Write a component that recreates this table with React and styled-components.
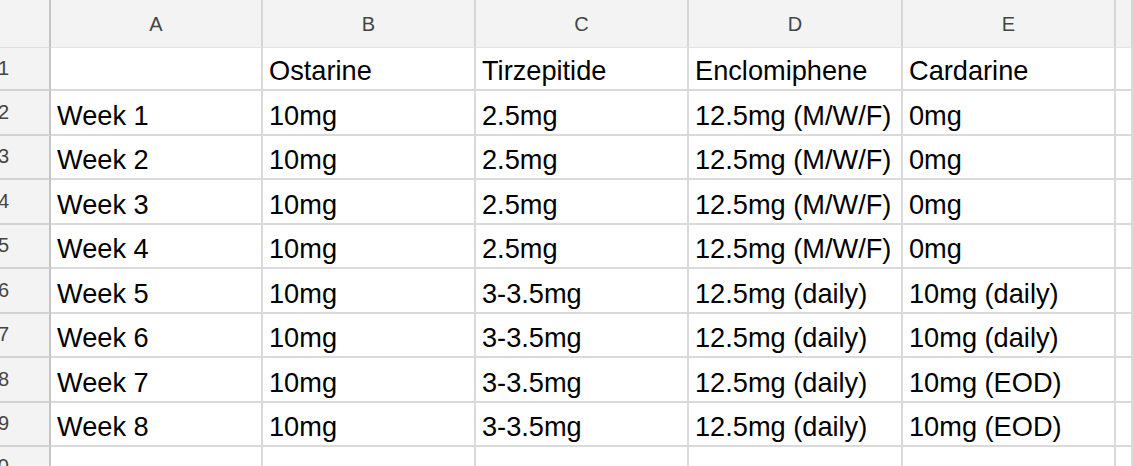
import React from "react";
import styled, { createGlobalStyle } from "styled-components";

const GlobalStyle = createGlobalStyle`
  html, body {
    margin: 0;
    padding: 0;
    background: #ffffff;
    overflow: hidden;
  }
  body {
    font-family: "Liberation Sans", Arial, sans-serif;
  }
`;

const columnWidths = [51, 212, 213, 213, 214, 213];
const letters = ["A", "B", "C", "D", "E"];

const rows = [
  ["", "Ostarine", "Tirzepitide", "Enclomiphene", "Cardarine"],
  ["Week 1", "10mg", "2.5mg", "12.5mg (M/W/F)", "0mg"],
  ["Week 2", "10mg", "2.5mg", "12.5mg (M/W/F)", "0mg"],
  ["Week 3", "10mg", "2.5mg", "12.5mg (M/W/F)", "0mg"],
  ["Week 4", "10mg", "2.5mg", "12.5mg (M/W/F)", "0mg"],
  ["Week 5", "10mg", "3-3.5mg", "12.5mg (daily)", "10mg (daily)"],
  ["Week 6", "10mg", "3-3.5mg", "12.5mg (daily)", "10mg (daily)"],
  ["Week 7", "10mg", "3-3.5mg", "12.5mg (daily)", "10mg (EOD)"],
  ["Week 8", "10mg", "3-3.5mg", "12.5mg (daily)", "10mg (EOD)"],
  ["", "", "", "", ""],
];

const Sheet = styled.div`
  display: grid;
  grid-template-columns: ${columnWidths.map((w) => `${w}px`).join(" ")} 1fr;
  grid-template-rows: 48px 43px repeat(8, 44.5px) 40px;
  width: 1133px;
  height: 466px;
  overflow: hidden;
  background: #ffffff;
`;

const Corner = styled.div`
  background: #f3f3f3;
  border-right: 2px solid #c4c4c4;
  border-bottom: 1px solid #dedede;
  box-sizing: border-box;
`;

const ColHeader = styled.div`
  display: flex;
  align-items: center;
  justify-content: center;
  background: #f3f3f3;
  border-right: 2px solid #d6d6d6;
  border-bottom: 1px solid #e4e4e4;
  box-sizing: border-box;
  color: #444444;
  font-size: 20px;
  padding-top: 2px;
`;

const RowHeader = styled.div`
  display: flex;
  align-items: center;
  justify-content: flex-end;
  padding-right: 40px;
  background: #f3f3f3;
  border-right: 2px solid #c4c4c4;
  border-bottom: 2px solid #d2d2d2;
  box-sizing: border-box;
  color: #444444;
  font-size: 20px;
  white-space: nowrap;
`;

const Cell = styled.div`
  display: flex;
  align-items: flex-end;
  padding: 0 3px 3px 6px;
  border-right: 2px solid #dadada;
  border-bottom: 2px solid #dadada;
  box-sizing: border-box;
  color: #000000;
  font-size: 27.2px;
  line-height: 30px;
  white-space: nowrap;
  overflow: hidden;
`;

const App = () => {
  return (
    <>
      <GlobalStyle />
      <Sheet>
        <Corner />
        {letters.map((letter) => (
          <ColHeader key={letter}>{letter}</ColHeader>
        ))}
        <ColHeader />

        {rows.map((row, i) => (
          <React.Fragment key={i}>
            <RowHeader>{i + 1}</RowHeader>
            {row.map((value, j) => (
              <Cell key={j}>{value}</Cell>
            ))}
            <Cell />
          </React.Fragment>
        ))}
      </Sheet>
    </>
  );
};

export default App;
